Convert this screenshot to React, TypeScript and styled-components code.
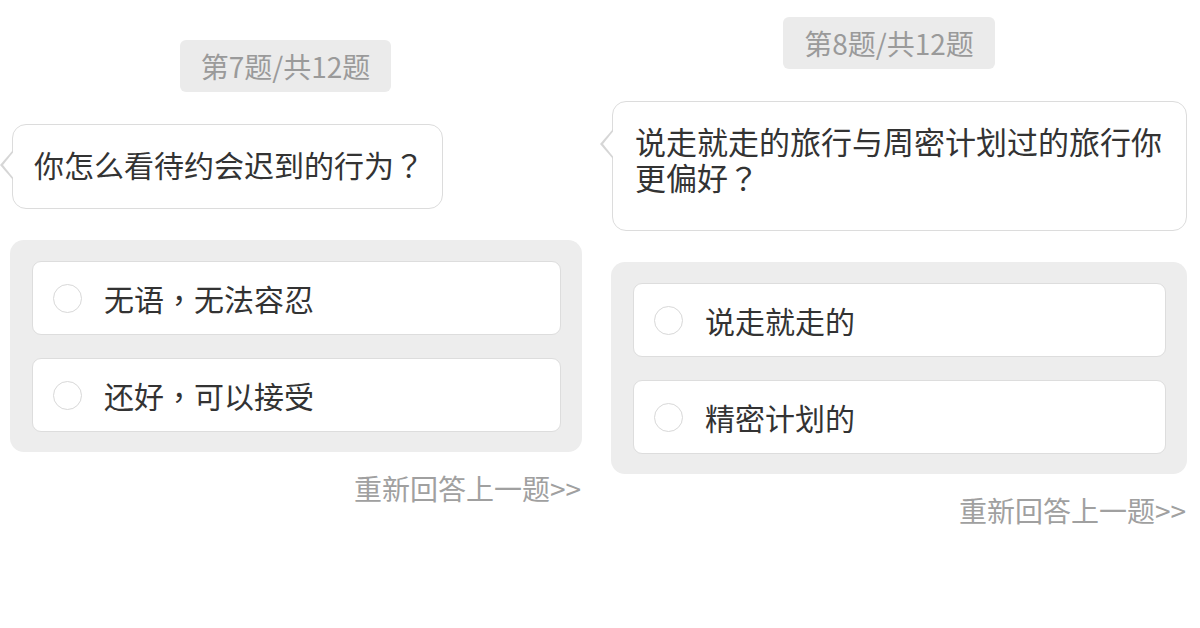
import React from "react";
import styled, { createGlobalStyle } from "styled-components";

const GlobalStyle = createGlobalStyle`
  html, body {
    margin: 0;
    padding: 0;
    background: #ffffff;
  }
  body {
    font-family: "Noto Sans CJK SC", "Noto Sans", sans-serif;
    color: #333333;
  }
`;

const Page = styled.div`
  display: flex;
  align-items: flex-start;
  gap: 29px;
  padding-left: 10px;
  width: 1200px;
  height: 628px;
  box-sizing: border-box;
  overflow: hidden;
`;

const Column = styled.div<{ $top: number; $width: number }>`
  display: flex;
  flex-direction: column;
  width: ${(p) => p.$width}px;
  padding-top: ${(p) => p.$top}px;
`;

const Badge = styled.div<{ $shift: number }>`
  align-self: center;
  margin-right: ${(p) => p.$shift}px;
  height: 52px;
  padding: 0 21px;
  display: flex;
  align-items: center;
  background: #ebebeb;
  border-radius: 6px;
  font-size: 28px;
  color: #9a9a9a;
`;

const Bubble = styled.div<{ $size: number; $inset: number; $bottom: number; $tail: number }>`
  position: relative;
  align-self: flex-start;
  margin-top: 32px;
  margin-left: ${(p) => p.$inset}px;
  padding: 21px 18px ${(p) => p.$bottom}px 21px;
  background: #ffffff;
  border: 1.5px solid #dcdcdc;
  border-radius: 14px;
  font-size: ${(p) => p.$size}px;
  line-height: 36px;
  color: #333333;

  &::before,
  &::after {
    content: "";
    position: absolute;
    top: ${(p) => p.$tail - 15}px;
    width: 0;
    height: 0;
    border-top: 15px solid transparent;
    border-bottom: 15px solid transparent;
  }
  &::before {
    left: -13px;
    border-right: 13px solid #d6d6d6;
  }
  &::after {
    left: -10.5px;
    border-right: 12px solid #ffffff;
  }
`;

const WideBubble = styled(Bubble)`
  align-self: stretch;
  padding-left: 22px;
`;

// fullwidth punctuation sits centred in the reference (TC style)
const Punct = styled.span`
  font-family: "Noto Sans CJK TC", "Noto Sans CJK SC", sans-serif;
`;

const Options = styled.div`
  display: flex;
  flex-direction: column;
  gap: 23px;
  margin-top: 31px;
  padding: 21px 21px 20px 22px;
  background: #ededed;
  border-radius: 14px;
`;

const Option = styled.div`
  display: flex;
  align-items: center;
  gap: 22px;
  height: 74px;
  padding-left: 20px;
  box-sizing: border-box;
  background: #ffffff;
  border: 1px solid #dddddd;
  border-radius: 9px;
  font-size: 30px;
  color: #333333;
`;

const Radio = styled.span`
  width: 29px;
  height: 29px;
  box-sizing: border-box;
  border: 1.5px solid #d8d8d8;
  border-radius: 50%;
  flex-shrink: 0;
`;

const Redo = styled.div`
  align-self: flex-end;
  margin-top: 18px;
  margin-right: 1px;
  font-size: 28px;
  line-height: 36px;
  color: #a0a0a0;
`;

type Question = {
  index: number;
  text: string;
  options: string[];
};

const questions: Question[] = [
  { index: 7, text: "你怎么看待约会迟到的行为？", options: ["无语，无法容忍", "还好，可以接受"] },
  {
    index: 8,
    text: "说走就走的旅行与周密计划过的旅行你更偏好？",
    options: ["说走就走的", "精密计划的"],
  },
];

function Text({ value }: { value: string }) {
  const parts = value.split(/([，？])/).filter(Boolean);
  return (
    <span>
      {parts.map((p, i) => (p === "，" || p === "？" ? <Punct key={i}>{p}</Punct> : p))}
    </span>
  );
}

function OptionList({ items }: { items: string[] }) {
  return (
    <Options>
      {items.map((o) => (
        <Option key={o}>
          <Radio />
          <Text value={o} />
        </Option>
      ))}
    </Options>
  );
}

export default function App() {
  const [first, second] = questions;
  return (
    <>
      <GlobalStyle />
      <Page>
        <Column $top={40} $width={572}>
          <Badge $shift={21}>第{first.index}题/共12题</Badge>
          <Bubble $size={30} $inset={2} $bottom={26} $tail={40}>
            <Text value={first.text} />
          </Bubble>
          <OptionList items={first.options} />
          <Redo>重新回答上一题&gt;&gt;</Redo>
        </Column>
        <Column $top={17} $width={576}>
          <Badge $shift={20}>第{second.index}题/共12题</Badge>
          <WideBubble $size={31} $inset={1} $bottom={35} $tail={42}>
            <Text value={second.text} />
          </WideBubble>
          <OptionList items={second.options} />
          <Redo>重新回答上一题&gt;&gt;</Redo>
        </Column>
      </Page>
    </>
  );
}
